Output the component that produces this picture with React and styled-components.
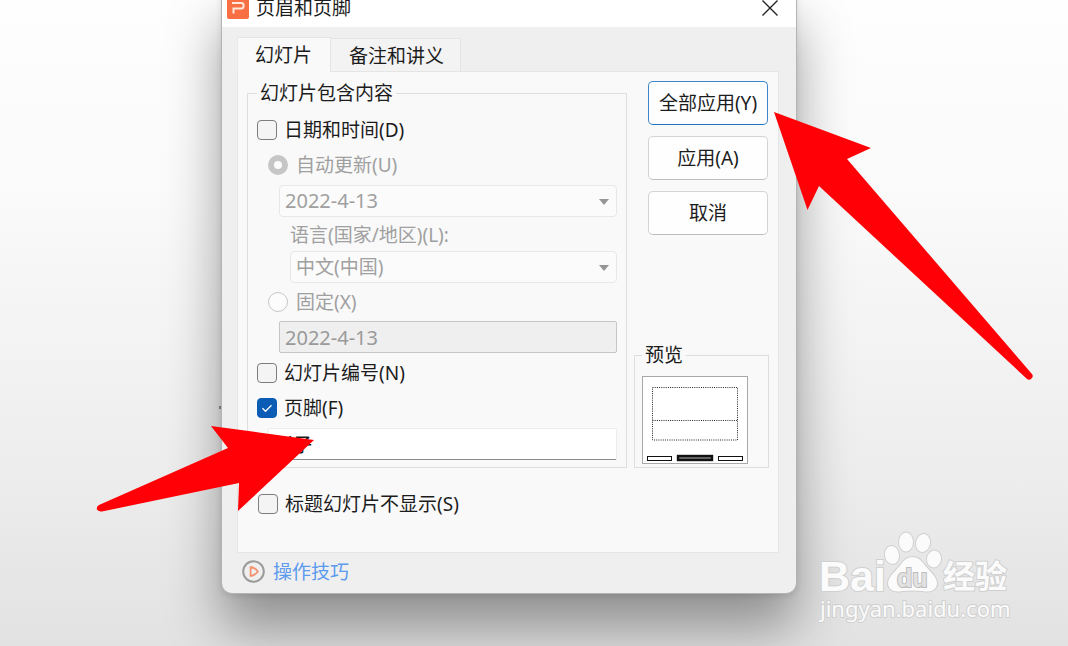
import React from "react";
import styled, { createGlobalStyle, css } from "styled-components";

const GlobalStyle = createGlobalStyle`
  *, *::before, *::after { box-sizing: border-box; }
  body {
    margin: 0;
    overflow: hidden;
    font-family: "Noto Sans", "Noto Sans CJK SC", sans-serif;
    font-size: 19px;
    line-height: 24px;
    color: #1c1c1c;
  }
  button, input, select { font: inherit; color: inherit; }
`;

const Stage = styled.main`
  position: relative;
  display: grid;
  grid-template-columns: 221fr 576fr 271fr;
  align-items: start;
  min-height: 100vh;
  overflow: hidden;
  background: linear-gradient(#fefefe, #fafafa 30%, #eeeeee 70%, #e2e2e2);
`;

const Dialog = styled.section`
  grid-column: 2;
  position: relative;
  margin-top: -11px;
  border: 1px solid #b4b4b4;
  border-radius: 11px;
  background: #efefef;
  box-shadow: 0 34px 54px rgba(0, 0, 0, 0.38), 0 2px 6px rgba(0, 0, 0, 0.1);
`;

const TitleBar = styled.header`
  display: flex;
  align-items: center;
  gap: 7px;
  height: 37px;
  padding: 0 18px 1px 5px;
  border-radius: 10px 10px 0 0;
  background: #fff;
`;

const Title = styled.h1`
  flex: 1;
  margin: 0;
  font-size: 19px;
  font-weight: 400;
`;

const IconButton = styled.button`
  display: flex;
  padding: 0;
  border: 0;
  background: none;
`;

const Body = styled.div`
  padding: 10px 17px 0 15px;
`;

const TabList = styled.div`
  display: flex;
  align-items: flex-end;
`;

const Tab = styled.button`
  height: 33px;
  padding: 1px 16px 0 18px;
  border: 1px solid #e4e4e4;
  border-bottom: 0;
  border-left: 0;
  background: #f3f3f3;
  ${(p) =>
    p["aria-selected"] &&
    css`
      height: 35px;
      margin-bottom: -1px;
      padding: 0 18px 0 17px;
      border-left: 1px solid #e9e9e9;
      background: #f9f9f9;
      z-index: 1;
    `}
`;

const Panel = styled.div`
  padding: 9px 9px 31px;
  border: 1px solid #e5e5e5;
  background: #f9f9f9;
`;

const Columns = styled.div`
  display: flex;
  gap: 7px;
  margin-bottom: 18px;
`;

const Group = styled.fieldset`
  min-width: 0;
  margin: 0;
  padding: ${(p) => p.$padding};
  border: 1px solid #dedede;
  ${(p) => p.$grow && "flex: 1;"}
`;

const Legend = styled.legend`
  padding: 0 3px;
`;

const Side = styled.div`
  display: flex;
  flex-direction: column;
  justify-content: space-between;
  width: 135px;
`;

const Actions = styled.div`
  display: flex;
  flex-direction: column;
  gap: 11px;
  padding: 0 1px 0 14px;
`;

const ActionButton = styled.button`
  height: 44px;
  padding: 0;
  border: 1px solid ${(p) => (p.$primary ? "#3d86c9" : "#d4d4d4")};
  border-bottom-color: ${(p) => (p.$primary ? "#2272bd" : "#bdbdbd")};
  border-radius: 5px;
  background: #fefefe;
`;

const Row = styled.label`
  display: flex;
  align-items: center;
  gap: ${(p) => (p.$radio ? 8 : 7)}px;
  height: 35px;
  margin-left: ${(p) => p.$indent || 0}px;
  color: ${(p) => (p.$muted ? "#a0a0a0" : "inherit")};
`;

const FieldLabel = styled.label`
  display: block;
  height: 32px;
  margin-left: 33px;
  line-height: 32px;
  color: #a0a0a0;
`;

const CheckBox = styled.input.attrs({ type: "checkbox" })`
  appearance: none;
  flex: none;
  width: 20px;
  height: 20px;
  margin: 0;
  border: 1px solid #7d7d7d;
  border-radius: 4px;
  background: #f4f4f4;
  &:checked {
    border-color: #0a5cb5;
    background: #0a5cb5
      url("data:image/svg+xml,%3Csvg xmlns='http://www.w3.org/2000/svg' viewBox='0 0 18 18'%3E%3Cpath d='M4.5 9.3l3 3 6-6' fill='none' stroke='white' stroke-width='1.3'/%3E%3C/svg%3E");
  }
`;

const Radio = styled.input.attrs({ type: "radio" })`
  appearance: none;
  flex: none;
  width: 20px;
  height: 20px;
  margin: 0;
  border: 1px solid #c6c6c6;
  border-radius: 50%;
  background: #fcfcfc;
  &:checked { border-width: 6px; }
`;

const SelectFrame = styled.div`
  position: relative;
  margin-top: ${(p) => (p.$snug ? 0 : 3)}px;
  margin-bottom: ${(p) => (p.$snug ? 1 : 2)}px;
  margin-left: ${(p) => p.$indent}px;
`;

const Select = styled.select`
  display: block;
  appearance: none;
  width: 100%;
  height: 32px;
  padding: 0 24px 0 5px;
  border: 1px solid #e8e8e8;
  border-radius: 4px;
  background: #fbfbfb;
  font-size: ${(p) => p.$size}px;
  &:disabled { color: #a0a0a0; opacity: 1; }
`;

const Caret = styled.svg`
  position: absolute;
  top: 14px;
  right: 8px;
  pointer-events: none;
`;

const TextInput = styled.input`
  display: block;
  width: calc(100% - ${(p) => p.$indent}px);
  height: 32px;
  margin: 3px 0 2px ${(p) => p.$indent}px;
  padding: 0 5px;
  border: 1px solid #ececec;
  border-bottom-color: #8a8a8a;
  border-radius: 2px;
  background: #fff;
  &:disabled {
    margin-top: 2px;
    border-color: #c6c6c6;
    background: #efefef;
    color: #9a9a9a;
    font-size: 20px;
  }
`;

const Footer = styled.footer`
  display: flex;
  align-items: center;
  gap: 8px;
  height: 40px;
  padding: 0 0 3px 20px;
`;

const TipLink = styled.a`
  color: #5b9aee;
  text-decoration: none;
`;

const Pointer = styled.svg`
  position: absolute;
  top: ${(p) => p.$top}px;
  left: ${(p) => p.$left}px;
  pointer-events: none;
  fill: #ff0006;
`;

const Speck = styled.span`
  position: absolute;
  top: 416px;
  left: -3px;
  width: 2px;
  height: 3px;
  background: #77706c;
`;

const Watermark = styled.svg`
  position: absolute;
  right: 53px;
  bottom: 21px;
`;

function DropDown({ id, label, value, size, indent, snug }) {
  return (
    <SelectFrame $indent={indent} $snug={snug}>
      <Select id={id} aria-label={label} $size={size} disabled>
        <option>{value}</option>
      </Select>
      <Caret width="10" height="6" aria-hidden="true">
        <path d="M0 0h10L5 6z" fill="#959595" />
      </Caret>
    </SelectFrame>
  );
}

function PreviewThumb() {
  return (
    <svg width="106" height="88" viewBox="0 0 106 88" role="img" aria-label="预览" display="block">
      <rect x=".5" y=".5" width="105" height="87" fill="#fff" stroke="#a9a9ad" />
      <g fill="none" stroke="#222" strokeDasharray="1 1.2">
        <rect x="10.5" y="11.5" width="85" height="52.5" />
        <path d="M10.5 44.5h85" />
      </g>
      <g fill="#fff" stroke="#111">
        <rect x="5.5" y="80.5" width="24" height="4" />
        <rect x="76.5" y="80.5" width="24" height="4" />
        <rect x="36" y="80" width="34" height="4" strokeWidth="2.4" fill="#777" />
      </g>
    </svg>
  );
}

export default function App() {
  return (
    <>
      <GlobalStyle />
      <Stage>
        <Dialog role="dialog" aria-labelledby="dialog-title">
          <Speck />
          <TitleBar>
            <svg width="22" height="22" viewBox="0 0 22 22" aria-hidden="true">
              <rect width="22" height="22" rx="2" fill="#f76f43" />
              <path d="M5 6h9.5q2 0 2 2v1.500q0 2-2 2H6.500v5" fill="none" stroke="#ffe9df" strokeWidth="2" />
            </svg>
            <Title id="dialog-title">页眉和页脚</Title>
            <IconButton type="button" aria-label="关闭">
              <svg width="16" height="16" viewBox="0 0 16 16">
                <path d="M.5.5l15 15M15.500.5l-15 15" stroke="#222" strokeWidth="1.4" />
              </svg>
            </IconButton>
          </TitleBar>
          <Body>
            <TabList role="tablist">
              <Tab type="button" role="tab" aria-selected={true}>幻灯片</Tab>
              <Tab type="button" role="tab">备注和讲义</Tab>
            </TabList>
            <Panel role="tabpanel">
              <Columns>
                <Group $grow $padding="7px 9px 5px">
                  <Legend>幻灯片包含内容</Legend>
                  <Row><CheckBox />日期和时间(D)</Row>
                  <Row $radio $muted $indent={11}>
                    <Radio name="date" disabled defaultChecked />自动更新(U)
                  </Row>
                  <DropDown label="自动更新日期" value="2022-4-13" size={20} indent={22} />
                  <FieldLabel htmlFor="language">语言(国家/地区)(L):</FieldLabel>
                  <DropDown id="language" value="中文(中国)" size={19} indent={33} snug />
                  <Row $radio $muted $indent={11}>
                    <Radio name="date" disabled />固定(X)
                  </Row>
                  <TextInput $indent={22} aria-label="固定日期" defaultValue="2022-4-13" disabled />
                  <Row><CheckBox />幻灯片编号(N)</Row>
                  <Row><CheckBox defaultChecked />页脚(F)</Row>
                  <TextInput $indent={11} aria-label="页脚文字" defaultValue="影子" />
                </Group>
                <Side>
                  <Actions>
                    <ActionButton type="button" $primary>全部应用(Y)</ActionButton>
                    <ActionButton type="button">应用(A)</ActionButton>
                    <ActionButton type="button">取消</ActionButton>
                  </Actions>
                  <Group $padding="9px 7px 3px">
                    <Legend>预览</Legend>
                    <PreviewThumb />
                  </Group>
                </Side>
              </Columns>
              <Row $indent={11}><CheckBox />标题幻灯片不显示(S)</Row>
            </Panel>
          </Body>
          <Footer>
            <svg width="23" height="23" viewBox="0 0 23 23" aria-hidden="true">
              <circle cx="11.5" cy="11.5" r="10.3" fill="none" stroke="#9b9b9b" strokeWidth="2" />
              <path d="M8.600 7v9q4-.5 7.400-4.500Q12.600 7.300 8.600 7z" fill="none" stroke="#f5906f" strokeWidth="1.8" strokeLinejoin="round" />
            </svg>
            <TipLink href="#tips">操作技巧</TipLink>
          </Footer>
          <Pointer $top={122} $left={551} width="264" height="272" viewBox="0 0 264 272" aria-hidden="true">
            <path d="M1 0L98 36 74 47 258.500 261.500a3.500 3.500 0 0 1-5 5L46 74 34.500 98z" />
          </Pointer>
          <Pointer $top={436} $left={-126} width="220" height="88" viewBox="0 0 220 88" aria-hidden="true">
            <path d="M218 14L115 0 132 22 3 79q-3 2-2 4.500 1.500 2.500 5 2L143 57 142 85z" />
          </Pointer>
        </Dialog>
        <Watermark width="196" height="96" viewBox="0 0 196 96" fill="#fbfbfb" stroke="#d0d0d0" strokeWidth="2" paintOrder="stroke">
          <text x="0" y="62" fontFamily="Liberation Sans, sans-serif" fontWeight="700" fontSize="43">Bai</text>
          <ellipse cx="73" cy="26" rx="7" ry="9" transform="rotate(-10 73 26)" />
          <ellipse cx="87" cy="13" rx="7" ry="9.500" />
          <ellipse cx="104" cy="14" rx="7" ry="9" transform="rotate(12 104 14)" />
          <ellipse cx="115" cy="30" rx="7" ry="8.500" transform="rotate(10 115 30)" />
          <path d="M93.500 28q7 0 12 8l9 10q6 8 2 13-4 5-13 3-10-1-20 0-9 2-13-3-4-5 2-13l9-10q5-8 12-8z" />
          <text x="78" y="58" fontFamily="Liberation Sans, sans-serif" fontWeight="700" fontSize="25" fill="#e2e2e2" stroke="#bcbcbc">du</text>
          <text x="124" y="59" fontFamily="Noto Sans CJK SC, sans-serif" fontWeight="700" fontSize="32">经验</text>
          <text x="1" y="88" fontFamily="Noto Sans, sans-serif" fontSize="22">jingyan.baidu.com</text>
        </Watermark>
      </Stage>
    </>
  );
}
